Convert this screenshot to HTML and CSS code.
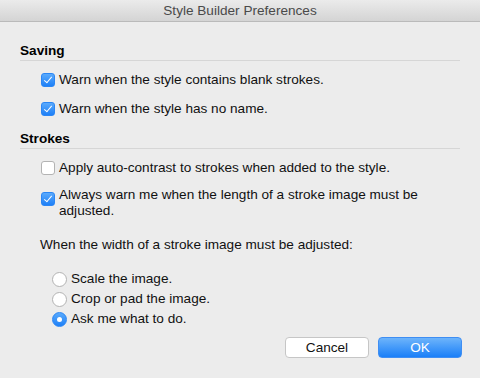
FILE: index.html
```html
<!DOCTYPE html>
<html lang="en">
<head>
  <meta charset="UTF-8" />
  <title>Style Builder Preferences</title>
  <link rel="stylesheet" href="styles.css">
</head>
<body>
  <div class="window">
    <div class="titlebar">Style Builder Preferences</div>
    <div class="content">
      <h2 class="section-title first">Saving</h2>
      <label class="check-row first">
        <span class="box checked"></span>
        <span class="label">Warn when the style contains blank strokes.</span>
      </label>
      <label class="check-row">
        <span class="box checked"></span>
        <span class="label">Warn when the style has no name.</span>
      </label>

      <h2 class="section-title">Strokes</h2>
      <label class="check-row first">
        <span class="box"></span>
        <span class="label">Apply auto-contrast to strokes when added to the style.</span>
      </label>
      <label class="check-row multi">
        <span class="box checked"></span>
        <span class="label">Always warn me when the length of a stroke image must be adjusted.</span>
      </label>

      <p class="question">When the width of a stroke image must be adjusted:</p>
      <div class="radio-group">
        <label class="radio-row"><span class="radio"></span>Scale the image.</label>
        <label class="radio-row"><span class="radio"></span>Crop or pad the image.</label>
        <label class="radio-row"><span class="radio selected"></span>Ask me what to do.</label>
      </div>

      <div class="buttons">
        <button class="btn cancel">Cancel</button>
        <button class="btn ok">OK</button>
      </div>
    </div>
  </div>
</body>
</html>
```

FILE: styles.css
```css
body {
  margin: 0;
  background-color: #ececec;
  font-family: 'Liberation Sans', Arial, sans-serif;
  font-size: 13.6px;
  line-height: 16px;
  color: #111;
}
.window {
  width: 480px;
  height: 378px;
  background-color: #ececec;
}
.titlebar {
  height: 21px;
  line-height: 22px;
  text-align: center;
  color: #4a4a4a;
  background: linear-gradient(#ebebeb, #d4d4d4);
  border-bottom: 1px solid #bababa;
}
.content {
  padding: 0 20px;
}
.section-title {
  margin: 14px 0 0;
  font-size: 13.6px;
  font-weight: bold;
  line-height: 16px;
  padding-bottom: 1px;
  border-bottom: 1px solid #d6d6d6;
  color: #000;
}
.section-title.first {
  margin-top: 21px;
}
.check-row {
  display: flex;
  align-items: flex-start;
  margin: 13px 0 0 21px;
}
.check-row.first {
  margin-top: 11px;
}
.check-row.multi {
  margin-top: 11px;
}
.box {
  flex: none;
  width: 12px;
  height: 12px;
  margin: 1px 4px 0 0;
  border: 1px solid #b3b3b3;
  border-radius: 3px;
  background: #fff;
  position: relative;
}
.check-row.multi .box {
  margin-top: 5px;
}
.box.checked {
  border-color: #2a86f5;
  background: linear-gradient(#5aaafc, #1e80f7);
}
.box.checked::after {
  content: '';
  position: absolute;
  left: 4px;
  top: 1px;
  width: 3px;
  height: 7px;
  border: solid #fff;
  border-width: 0 1.5px 1.5px 0;
  transform: rotate(40deg);
}
.label {
  width: 390px;
}
.question {
  margin: 18px 0 0 20px;
}
.radio-group {
  display: flex;
  flex-direction: column;
  gap: 4px;
  margin: 18px 0 0 32px;
}
.radio-row {
  display: flex;
  align-items: flex-start;
}
.radio {
  flex: none;
  width: 13px;
  height: 13px;
  margin: 1px 4px 0 0;
  border: 1px solid #b3b3b3;
  border-radius: 50%;
  background: #fff;
  position: relative;
}
.radio.selected {
  border-color: #2a86f5;
  background: linear-gradient(#5aaafc, #1e80f7);
}
.radio.selected::after {
  content: '';
  position: absolute;
  left: 4px;
  top: 4px;
  width: 5px;
  height: 5px;
  border-radius: 50%;
  background: #fff;
}
.buttons {
  display: flex;
  justify-content: flex-end;
  gap: 9px;
  margin: 10px -2px 0 0;
}
.btn {
  font-family: 'Liberation Sans', Arial, sans-serif;
  font-size: 13.6px;
  height: 21px;
  padding: 0;
  border-radius: 4px;
}
.cancel {
  width: 84px;
  background: #fff;
  border: 1px solid #c6c6c6;
  color: #111;
}
.ok {
  width: 84px;
  background: linear-gradient(#6db4fb, #1a7ff8);
  border: 1px solid #3f8ef3;
  color: #fff;
}
```
